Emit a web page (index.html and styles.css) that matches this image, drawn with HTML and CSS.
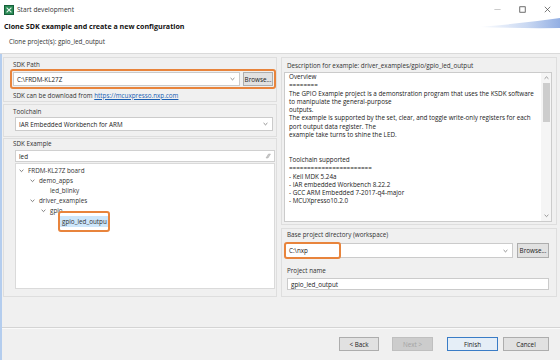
FILE: index.html
```html
<!DOCTYPE html>
<html>
<head>
<meta charset="utf-8">
<title>Start development</title>
<link rel="stylesheet" href="styles.css">
</head>
<body>
<div class="window">
  <div class="titlebar">
    <svg class="appicon" viewBox="0 0 10 10"><rect x="0.5" y="0.5" width="9" height="9" fill="#2b8a55" stroke="#16603a"/><path d="M2.6 2.6 L7.4 7.4 M7.4 2.6 L2.6 7.4" stroke="#e8f5ec" stroke-width="1.1"/></svg>
    <span class="wtitle">Start development</span>
    <div class="wctrls">
      <span class="wc"><svg width="9" height="9" viewBox="0 0 9 9"><path d="M0.5 4.5 H8.5" stroke="#b5b5b5" stroke-width="0.9"/></svg></span>
      <span class="wc"><svg width="9" height="9" viewBox="0 0 9 9"><rect x="1" y="1" width="7" height="7" fill="none" stroke="#444" stroke-width="1"/></svg></span>
      <span class="wc"><svg width="9" height="9" viewBox="0 0 9 9"><path d="M1 1 L8 8 M8 1 L1 8" stroke="#444" stroke-width="0.9"/></svg></span>
    </div>
  </div>
  <svg class="swoosh" viewBox="0 0 82 14" preserveAspectRatio="none"><defs><linearGradient id="sw" x1="0" x2="1" y1="0" y2="0"><stop offset="0" stop-color="#ffffff"/><stop offset="0.6" stop-color="#c9d8f2"/><stop offset="1" stop-color="#93afe3"/></linearGradient></defs><path d="M0 11 Q40 8 82 2 L82 12 Q40 12.5 0 11 Z" fill="url(#sw)"/></svg>
  <div class="header">
    <div class="h-title">Clone SDK example and create a new configuration</div>
    <div class="h-sub">Clone project(s): gpio_led_output</div>
  </div>
  <div class="content">
    <div class="main">
      <div class="col left">
        <div class="sec s-path">
          <div class="lbl">SDK Path</div>
          <div class="hl">
            <div class="combo"><span class="cval">C:\FRDM-KL27Z</span><svg class="carrow" viewBox="0 0 6 4"><path d="M0.7 0.8 L3 3 L5.3 0.8" fill="none" stroke="#666" stroke-width="0.9"/></svg></div>
            <div class="btn browse">Browse...</div>
          </div>
          <div class="linkline">SDK can be download from <span class="link">https://mcuxpresso.nxp.com</span></div>
        </div>
        <div class="sec s-tool">
          <div class="lbl">Toolchain</div>
          <div class="combo tool"><span class="cval">IAR Embedded Workbench for ARM</span><svg class="carrow" viewBox="0 0 6 4"><path d="M0.7 0.8 L3 3 L5.3 0.8" fill="none" stroke="#666" stroke-width="0.9"/></svg></div>
        </div>
        <div class="sec s-ex">
          <div class="lbl">SDK Example</div>
          <div class="search"><span class="cval">led</span><svg class="clear" viewBox="0 0 6 6"><path d="M1 5 L3.5 1 L5.5 1 L3 5 Z" fill="#c9c9c9" stroke="#a9a9a9" stroke-width="0.5"/></svg></div>
          <div class="tree">
            <div class="ti l0"><span class="chev"><svg viewBox="0 0 6 4"><path d="M0.7 0.8 L3 3 L5.3 0.8" fill="none" stroke="#555" stroke-width="0.9"/></svg></span><span>FRDM-KL27Z board</span></div>
            <div class="ti l1"><span class="chev"><svg viewBox="0 0 6 4"><path d="M0.7 0.8 L3 3 L5.3 0.8" fill="none" stroke="#555" stroke-width="0.9"/></svg></span><span>demo_apps</span></div>
            <div class="ti l2"><span class="chev"></span><span>led_blinky</span></div>
            <div class="ti l1"><span class="chev"><svg viewBox="0 0 6 4"><path d="M0.7 0.8 L3 3 L5.3 0.8" fill="none" stroke="#555" stroke-width="0.9"/></svg></span><span>driver_examples</span></div>
            <div class="ti l2"><span class="chev"><svg viewBox="0 0 6 4"><path d="M0.7 0.8 L3 3 L5.3 0.8" fill="none" stroke="#555" stroke-width="0.9"/></svg></span><span>gpio</span></div>
            <div class="ti l3"><span class="chev"></span><span class="sel">gpio_led_outpu<span class="ring"></span></span></div>
          </div>
        </div>
      </div>
      <div class="col right">
        <div class="sec s-desc">
          <div class="lbl">Description for example: driver_examples/gpio/gpio_led_output</div>
          <div class="textarea">
            <div class="tatext">Overview
========
The GPIO Example project is a demonstration program that uses the KSDK software
to manipulate the general-purpose
outputs.
The example is supported by the set, clear, and toggle write-only registers for each
port output data register. The
example take turns to shine the LED.


Toolchain supported
=======================
- Keil MDK 5.24a
- IAR embedded Workbench 8.22.2
- GCC ARM Embedded 7-2017-q4-major
- MCUXpresso10.2.0</div>
            <div class="vscroll">
              <div class="sbb"><svg viewBox="0 0 6 4"><path d="M0.7 3.2 L3 1 L5.3 3.2" fill="none" stroke="#777" stroke-width="0.9"/></svg></div>
              <div class="thumb"></div>
              <div class="track"></div>
              <div class="sbb"><svg viewBox="0 0 6 4"><path d="M0.7 0.8 L3 3 L5.3 0.8" fill="none" stroke="#777" stroke-width="0.9"/></svg></div>
            </div>
          </div>
        </div>
        <div class="sec s-proj">
          <div class="lbl">Base project directory (workspace)</div>
          <div class="row">
            <div class="combo base"><span class="cval">C:\nxp</span><span class="ring2"></span><svg class="carrow" viewBox="0 0 6 4"><path d="M0.7 0.8 L3 3 L5.3 0.8" fill="none" stroke="#666" stroke-width="0.9"/></svg></div>
            <div class="btn browse2">Browse...</div>
          </div>
          <div class="lbl pname">Project name</div>
          <div class="input"><span class="cval">gpio_led_output</span></div>
        </div>
      </div>
    </div>
    <div class="footer">
      <div class="sep"></div>
      <div class="buttons">
        <div class="btn b-back">&lt; Back</div>
        <div class="btn b-next">Next &gt;</div>
        <div class="btn b-finish">Finish</div>
        <div class="btn b-cancel">Cancel</div>
      </div>
    </div>
  </div>
</div>
</body>
</html>
```

FILE: styles.css
```css
* { box-sizing: border-box; margin: 0; padding: 0; }
html, body { width: 560px; height: 360px; overflow: hidden; }
body {
  font-family: "Open Sans", "Noto Sans", sans-serif;
  font-size: 6.3px;
  color: #222;
  background: #fff;
}
.window {
  width: 560px;
  height: 360px;
  display: flex;
  flex-direction: column;
  position: relative;
  background: #f0f0f0;
}
.titlebar {
  height: 19px;
  background: #fff;
  display: flex;
  align-items: center;
  padding-left: 4px;
}
.appicon { width: 10px; height: 10px; margin-right: 3px; }
.wtitle { font-size: 6.6px; color: #333; }
.wctrls { margin-left: auto; display: flex; height: 19px; }
.wc { width: 25px; display: flex; align-items: center; justify-content: center; }
.wc svg { width: 7px; height: 7px; }
.swoosh {
  position: absolute;
  left: 478px;
  top: 16px;
  width: 82px;
  height: 14px;
}
.header {
  height: 35px;
  background: #fff;
  border-bottom: 1px solid #dadada;
  padding: 2px 0 0 4px;
}
.h-title { font-weight: 700; font-size: 7.1px; line-height: 11px; color: #111; }
.h-sub { margin-top: 5px; padding-left: 5px; line-height: 9px; color: #333; }

.content {
  flex: 1;
  display: flex;
  flex-direction: column;
  border-left: 2px solid #b4cdee;
}
.main {
  height: 243px;
  display: flex;
  gap: 4px;
  padding: 3px 3px 0 1px;
}
.col { display: flex; flex-direction: column; }
.left { width: 274px; }
.right { flex: 1; }
.sec { border: 1px solid #dedede; background: #f0f0f0; }
.lbl { line-height: 8px; color: #333; white-space: nowrap; }

.s-path { height: 45px; padding: 3px 0 0 9px; }
.hl {
  margin-left: -3px;
  border: 2px solid #e8843c;
  border-radius: 3px;
  padding: 1px;
  display: flex;
  gap: 3px;
}
.combo {
  height: 14px;
  background: #fff;
  border: 1px solid #cbcbcb;
  display: flex;
  align-items: center;
  padding: 0 4px 0 3px;
  position: relative;
}
.hl .combo { flex: 1; }
.cval { flex: 1; white-space: nowrap; color: #222; }
.carrow { width: 5px; height: 4px; }
.btn {
  display: flex;
  align-items: center;
  justify-content: center;
  background: #e1e1e1;
  border: 1px solid #adadad;
  color: #222;
  white-space: nowrap;
}
.browse { width: 30px; height: 14px; }
.linkline { margin-top: 1.5px; line-height: 9px; color: #333; }
.link { color: #1a5fb4; text-decoration: underline; }

.s-tool { height: 33px; margin-top: 2px; padding: 3px 3px 0 9px; }
.combo.tool { margin-top: 1px; margin-left: 2px; }

.s-ex { height: 159px; margin-top: 1px; padding: 1px 1px 0 9px; }
.search {
  margin-top: 2px;
  margin-left: 2px;
  height: 12px;
  background: #fff;
  border: 1px solid #d0d0d0;
  display: flex;
  align-items: center;
  padding: 0 3px 0 3px;
}
.clear { width: 6px; height: 6px; }
.tree {
  margin-top: 1px;
  margin-left: 2px;
  height: 126px;
  background: #fff;
  border: 1px solid #dadada;
  padding: 2px 0 0 2px;
}
.ti { display: flex; align-items: center; height: 10px; line-height: 10px; color: #333; }
.chev { width: 10px; height: 10px; display: flex; align-items: center; justify-content: flex-start; padding-left: 0.5px; }
.chev svg { width: 5px; height: 3.5px; }
.l1 { padding-left: 11px; }
.l2 { padding-left: 22px; }
.l3 { padding-left: 32px; }
.sel {
  position: relative;
  background: #cce6fb;
  padding: 0 1px 0 2px;
  line-height: 11px;
}
.ring {
  position: absolute;
  left: -2px;
  right: -2px;
  top: -5px;
  bottom: -5px;
  border: 2px solid #e8843c;
  border-radius: 3px;
}

.s-desc { height: 168px; padding: 4px 4px 2px 2px; }
.s-desc .lbl { padding-left: 3px; }
.textarea {
  margin-top: 2px;
  height: 150px;
  background: #fff;
  border: 1px solid #cbcbcb;
  display: flex;
}
.tatext {
  flex: 1;
  white-space: pre;
  line-height: 8.3px;
  padding: 0 0 0 4px;
  color: #222;
  overflow: hidden;
}
.vscroll { width: 10px; display: flex; flex-direction: column; background: #f5f5f5; }
.sbb { height: 10px; display: flex; align-items: center; justify-content: center; }
.sbb svg { width: 5px; height: 3.5px; }
.thumb { height: 39px; margin: 0 1.5px; background: #cdcdcd; }
.track { flex: 1; }

.s-proj { height: 69px; margin-top: 3px; padding: 2px 7px 0 3px; }
.s-proj .lbl { padding-left: 2px; }
.row { margin-top: 4px; display: flex; gap: 4px; }
.combo.base { flex: 1; height: 15px; }
.ring2 {
  position: absolute;
  left: -2px;
  top: -2px;
  width: 57px;
  bottom: -2px;
  border: 2px solid #e8843c;
  border-radius: 3px;
}
.browse2 { width: 32px; height: 15px; }
.lbl.pname { margin-top: 9px; }
.input {
  margin-top: 3px;
  margin-left: 2px;
  height: 12px;
  background: #fff;
  border: 1px solid #cbcbcb;
  display: flex;
  align-items: center;
  padding: 0 3px;
}

.footer { flex: 1; padding-top: 30px; }
.sep { height: 2px; border-top: 1px solid #d4d4d4; border-bottom: 1px solid #fafafa; }
.buttons { margin-top: 8px; display: flex; justify-content: flex-end; padding-right: 11px; }
.buttons .btn { height: 14px; }
.b-back { width: 40px; }
.b-next { width: 41px; margin-left: 13px; background: #cccccc; border-color: #bfbfbf; color: #a3a3a3; }
.b-finish { width: 51px; margin-left: 14px; background: #e5eef7; border-color: #3a7cc6; }
.b-cancel { width: 46px; margin-left: 5px; }
```
